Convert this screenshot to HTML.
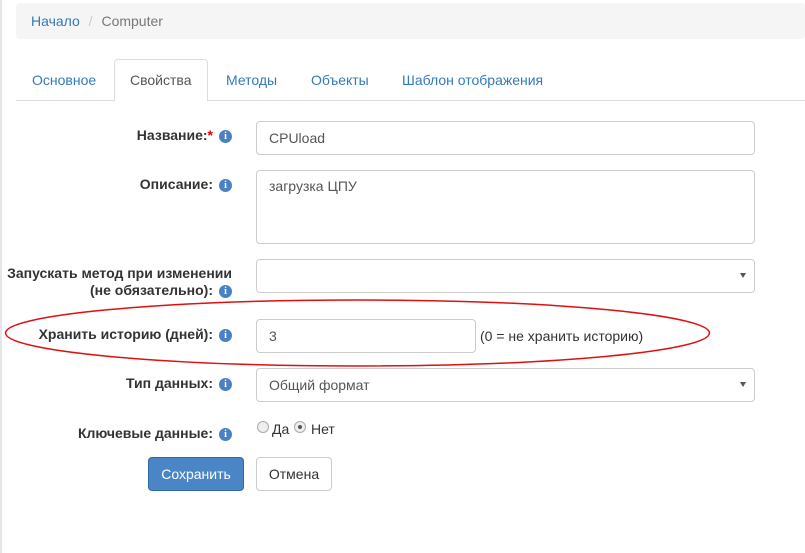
<!DOCTYPE html>
<html><head><meta charset="utf-8"><style>
*{box-sizing:border-box}
body{margin:0;width:805px;height:553px;background:#fff;font-family:"Liberation Sans",sans-serif;font-size:14px;color:#333;position:relative;overflow:hidden}
.a{position:absolute}
.lbl{position:absolute;font-weight:bold;text-align:right;right:573px;line-height:17px}
.i{display:inline-block;width:13px;height:13px;border-radius:50%;background:#4a80c4;color:#fff;font-size:10px;font-weight:bold;text-align:center;line-height:13px;vertical-align:1px;margin-left:6px;font-family:"Liberation Serif",serif}
.inp{position:absolute;left:256px;border:1px solid #ccc;border-radius:4px;background:#fff;padding:0 12px;color:#555}
.tab{position:absolute;top:72px;color:#337ab7}
.caret{position:absolute;right:8px;top:13px;border-left:3px solid transparent;border-right:3px solid transparent;border-top:5px solid #555}
</style></head><body>
<div class="a" style="left:0;top:0;width:2px;height:553px;background:#e6e6e6"></div>
<div class="a" style="left:16px;top:3px;width:789px;height:36px;background:#f5f5f5;border-radius:4px"></div>
<div class="a" style="left:31px;top:13px;color:#337ab7">Начало <span style="color:#ccc;padding:0 5px">/</span> <span style="color:#777">Computer</span></div>
<div class="a" style="left:16px;top:100px;width:789px;height:1px;background:#ddd"></div>
<div class="a" style="left:114px;top:59px;width:94px;height:42px;border:1px solid #ddd;border-bottom:none;border-radius:4px 4px 0 0;background:#fff"></div>
<div class="tab" style="left:32px">Основное</div>
<div class="tab" style="left:130px;color:#555">Свойства</div>
<div class="tab" style="left:226px">Методы</div>
<div class="tab" style="left:311px">Объекты</div>
<div class="tab" style="left:402px">Шаблон отображения</div>

<div class="lbl" style="top:127px">Название:<span style="color:#d00">*</span><span class="i">i</span></div>
<div class="inp" style="top:121px;width:499px;height:34px;line-height:32px;color:#555">CPUload</div>
<div class="lbl" style="top:176px">Описание:<span class="i">i</span></div>
<div class="inp" style="top:170px;width:499px;height:74px;padding-top:7px">загрузка ЦПУ</div>
<div class="lbl" style="top:265px">Запускать метод при изменении<br>(не обязательно):<span class="i">i</span></div>
<div class="inp" style="top:259px;width:499px;height:34px"><div class="caret"></div></div>
<div class="lbl" style="top:326px">Хранить историю (дней):<span class="i">i</span></div>
<div class="inp" style="top:319px;width:220px;height:34px;line-height:32px">3</div>
<div class="a" style="left:480px;top:328px">(0 = не хранить историю)</div>
<div class="lbl" style="top:375px">Тип данных:<span class="i">i</span></div>
<div class="inp" style="top:368px;width:499px;height:34px;line-height:32px">Общий формат<div class="caret"></div></div>
<div class="lbl" style="top:425px">Ключевые данные:<span class="i">i</span></div>
<div class="a" style="left:257px;top:421px;width:12px;height:12px;border-radius:50%;border:1px solid #aaa;background:#eee"></div>
<div class="a" style="left:272px;top:421px">Да</div>
<div class="a" style="left:294px;top:421px;width:12px;height:12px;border-radius:50%;border:1px solid #aaa;background:#eee"><div style="width:4px;height:4px;border-radius:50%;background:#555;margin:3px"></div></div>
<div class="a" style="left:311px;top:421px">Нет</div>
<div class="a" style="left:148px;top:457px;width:96px;height:34px;background:#4a86c5;border:1px solid #2e6da4;border-radius:4px;color:#fff;text-align:center;line-height:32px">Сохранить</div>
<div class="a" style="left:256px;top:457px;width:76px;height:34px;border:1px solid #ccc;border-radius:4px;text-align:center;line-height:32px">Отмена</div>
<svg class="a" style="left:0;top:0" width="805" height="553"><ellipse cx="357.5" cy="333" rx="352" ry="33" fill="none" stroke="#d11" stroke-width="1.5"/></svg>
</body></html>
